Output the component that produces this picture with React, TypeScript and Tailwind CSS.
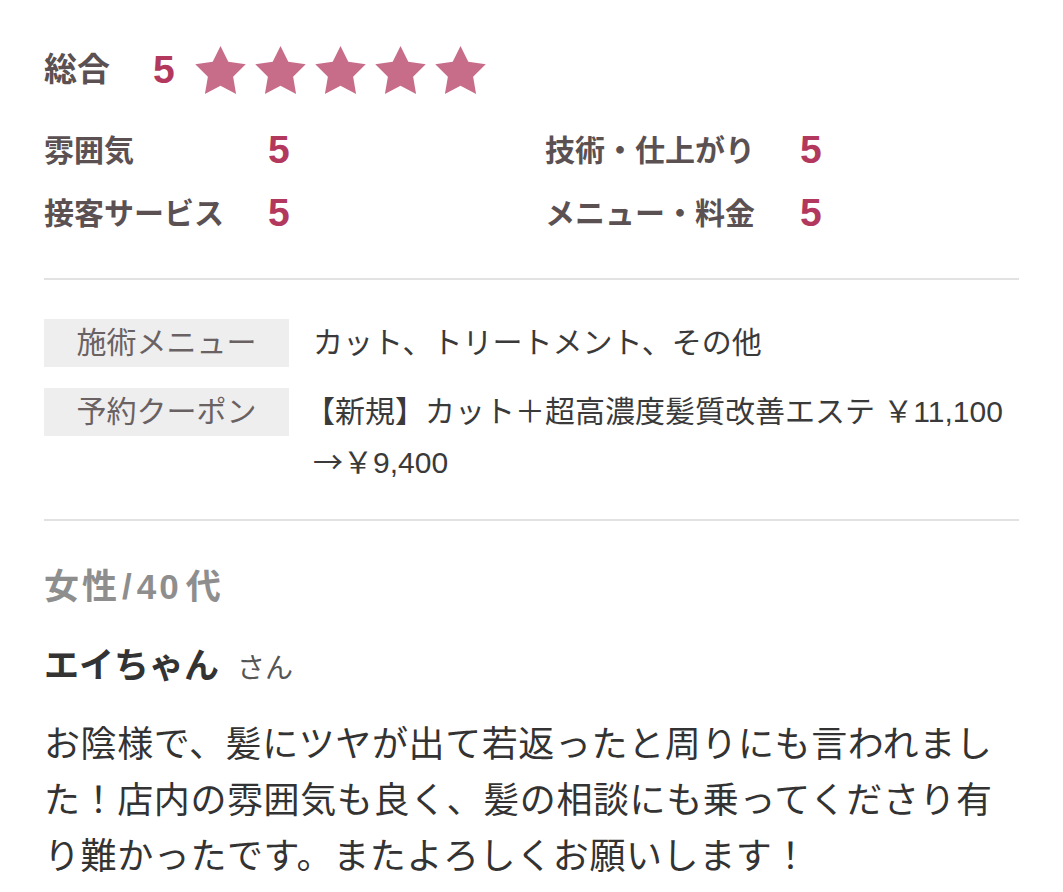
import React from 'react';

const ratings = [
    { label: '雰囲気', score: 5, right: '技術・仕上がり', rightScore: 5 },
    { label: '接客サービス', score: 5, right: 'メニュー・料金', rightScore: 5 },
];

function Star() {
    return (
        <svg width="51" height="48" viewBox="2 2 20 19.02" className="fill-[#c86d89]">
            <path d="M12 2l3.09 6.26L22 9.27l-5 4.87 1.18 6.88L12 17.77l-6.18 3.25L7 14.14 2 9.27l6.91-1.01L12 2z" />
        </svg>
    );
}

export default function App() {
    return (
        <div className="w-[1063px] min-h-[892px] bg-white px-[44px] pt-[40px] font-['Liberation_Sans','Noto_Sans_CJK_JP',sans-serif] text-[#333]">
            {/* Overall */}
            <div className="flex h-[60px] items-center">
                <span className="text-[33px] font-bold text-[#5b5153]">総合</span>
                <span className="ml-[43px] text-[39px] font-semibold text-[#b3385d]">5</span>
                <div className="ml-[20px] flex gap-[9px]">
                    {[0, 1, 2, 3, 4].map((i) => (
                        <Star key={i} />
                    ))}
                </div>
            </div>

            {/* Detail ratings */}
            <div className="mt-[19px] grid grid-cols-[224px_277px_255px_1fr]">
                {ratings.map((r) => (
                    <React.Fragment key={r.label}>
                        <div className="flex h-[63px] items-center text-[30px] font-bold text-[#5b5153]">{r.label}</div>
                        <div className="flex h-[63px] items-center text-[39px] font-bold text-[#b3385d]">{r.score}</div>
                        <div className="flex h-[63px] items-center text-[30px] font-bold text-[#5b5153]">{r.right}</div>
                        <div className="flex h-[63px] items-center text-[39px] font-bold text-[#b3385d]">{r.rightScore}</div>
                    </React.Fragment>
                ))}
            </div>

            <div className="mt-[33px] border-t-2 border-[#e2e2e2]" />

            {/* Menu / coupon */}
            <div className="mt-[39px] flex flex-col gap-[21px]">
                <div className="flex items-start gap-[24px]">
                    <div className="h-[48px] w-[245px] shrink-0 bg-[#eeeeee] text-center text-[30px] leading-[48px] text-[#6a6163]">施術メニュー</div>
                    <div className="text-[30px] leading-[48px] text-[#3a3a3a]">カット、トリートメント、その他</div>
                </div>
                <div className="flex items-start gap-[24px]">
                    <div className="h-[48px] w-[245px] shrink-0 bg-[#eeeeee] text-center text-[30px] leading-[48px] text-[#6a6163]">予約クーポン</div>
                    <div className="text-[30px] leading-[48px] text-[#3a3a3a]">
                        <span className="-ml-[8px]">【</span>新規】カット＋超高濃度髪質改善エステ <span className="whitespace-nowrap">￥11,100</span>{' '}
                        <span className="whitespace-nowrap">
                            <span className="font-['Noto_Sans_CJK_JP',sans-serif]">→</span>￥9,400
                        </span>
                    </div>
                </div>
            </div>

            <div className="mt-[32px] border-t-2 border-[#e2e2e2]" />

            {/* Reviewer */}
            <div className="mt-[42px] text-[35px] font-bold leading-[48px] tracking-[3px] text-[#8e8e8e]">
                女性<span className="mx-[2px]">/</span>40<span className="ml-[4px]">代</span>
            </div>
            <div className="mt-[31px] flex items-baseline gap-[18px] leading-[48px]">
                <span className="text-[35px] font-bold text-[#333]">エイちゃん</span>
                <span className="text-[28px] text-[#555]">さん</span>
            </div>
            <p className="mt-[24px] text-[36px] leading-[56px] tracking-[0.6px] text-[#333]">
                お陰様で、髪にツヤが出て若返ったと周りにも言われました！店内の雰囲気も良く、髪の相談にも乗ってくださり有り難かったです。またよろしくお願いします！
            </p>
        </div>
    );
}
